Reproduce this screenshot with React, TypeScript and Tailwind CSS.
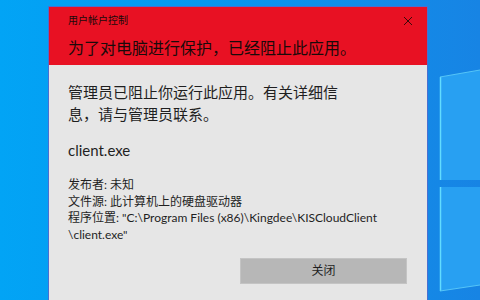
import React from 'react';

const font = { fontFamily: 'Lato, "Noto Sans CJK SC", sans-serif' };

function WindowsLogo() {
  return (
    <svg
      className="absolute left-0 top-0"
      width="480"
      height="300"
      viewBox="0 0 480 300"
    >
      <polygon points="440,77 480,70 480,180 440,180" fill="#28a0f2" />
      <polygon points="440,187 480,187 480,285 440,291" fill="#28a0f2" />
      <line x1="440.5" y1="77" x2="440.5" y2="180" stroke="#62dcff" strokeWidth="1.5" />
      <line x1="440.5" y1="187" x2="440.5" y2="291" stroke="#62dcff" strokeWidth="1.5" />
      <line x1="440" y1="77" x2="480" y2="70" stroke="#55c4f7" strokeWidth="1" />
      <line x1="440" y1="291" x2="480" y2="285" stroke="#55c4f7" strokeWidth="1" />
    </svg>
  );
}

export default function App() {
  return (
    <div
      className="relative h-[300px] w-[480px] overflow-hidden bg-gradient-to-r from-[#02a4f5] via-[#0895ee] to-[#1784e4]"
      style={font}
    >
      <WindowsLogo />

      <div className="relative ml-[48px] mt-[6px] w-[380px] border border-[#4a6fd0]">
        <div className="relative h-[58px] bg-[#e81123] px-[19px] pt-[7px]">
          <div className="text-[10px] leading-[12px] text-[#1a0a0a]">用户帐户控制</div>
          <div className="mt-[11px] text-[16px] leading-[22px] text-[#1a0a0a]">
            为了对电脑进行保护，已经阻止此应用。
          </div>
          <svg
            className="absolute right-[14px] top-[9px]"
            width="10"
            height="10"
            viewBox="0 0 10 10"
          >
            <path d="M1 1 L9 9 M9 1 L1 9" stroke="#3a0a0a" strokeWidth="1" />
          </svg>
        </div>

        <div className="h-[240px] bg-[#e6e6e6] px-[19px] pt-[16px] text-[#1f1f1f]">
          <p className="max-w-[280px] text-[15px] leading-[22px]">
            管理员已阻止你运行此应用。有关详细信息，请与管理员联系。
          </p>
          <p className="mt-[15px] text-[15px] leading-[20px]">client.exe</p>

          <div className="mt-[17px] text-[12px] leading-[16.5px]">
            <p>发布者: 未知</p>
            <p>文件源: 此计算机上的硬盘驱动器</p>
            <p>
              程序位置: "C:\Program Files (x86)\Kingdee\KISCloudClient
              <br />
              \client.exe"
            </p>
          </div>

          <div className="mt-[15px] flex justify-end pr-[1px]">
            <button className="h-[26px] w-[167px] border border-[#c4c4c4] bg-[#b7b7b7] text-[12px] text-[#1f1f1f]">
              关闭
            </button>
          </div>
        </div>
      </div>
    </div>
  );
}
